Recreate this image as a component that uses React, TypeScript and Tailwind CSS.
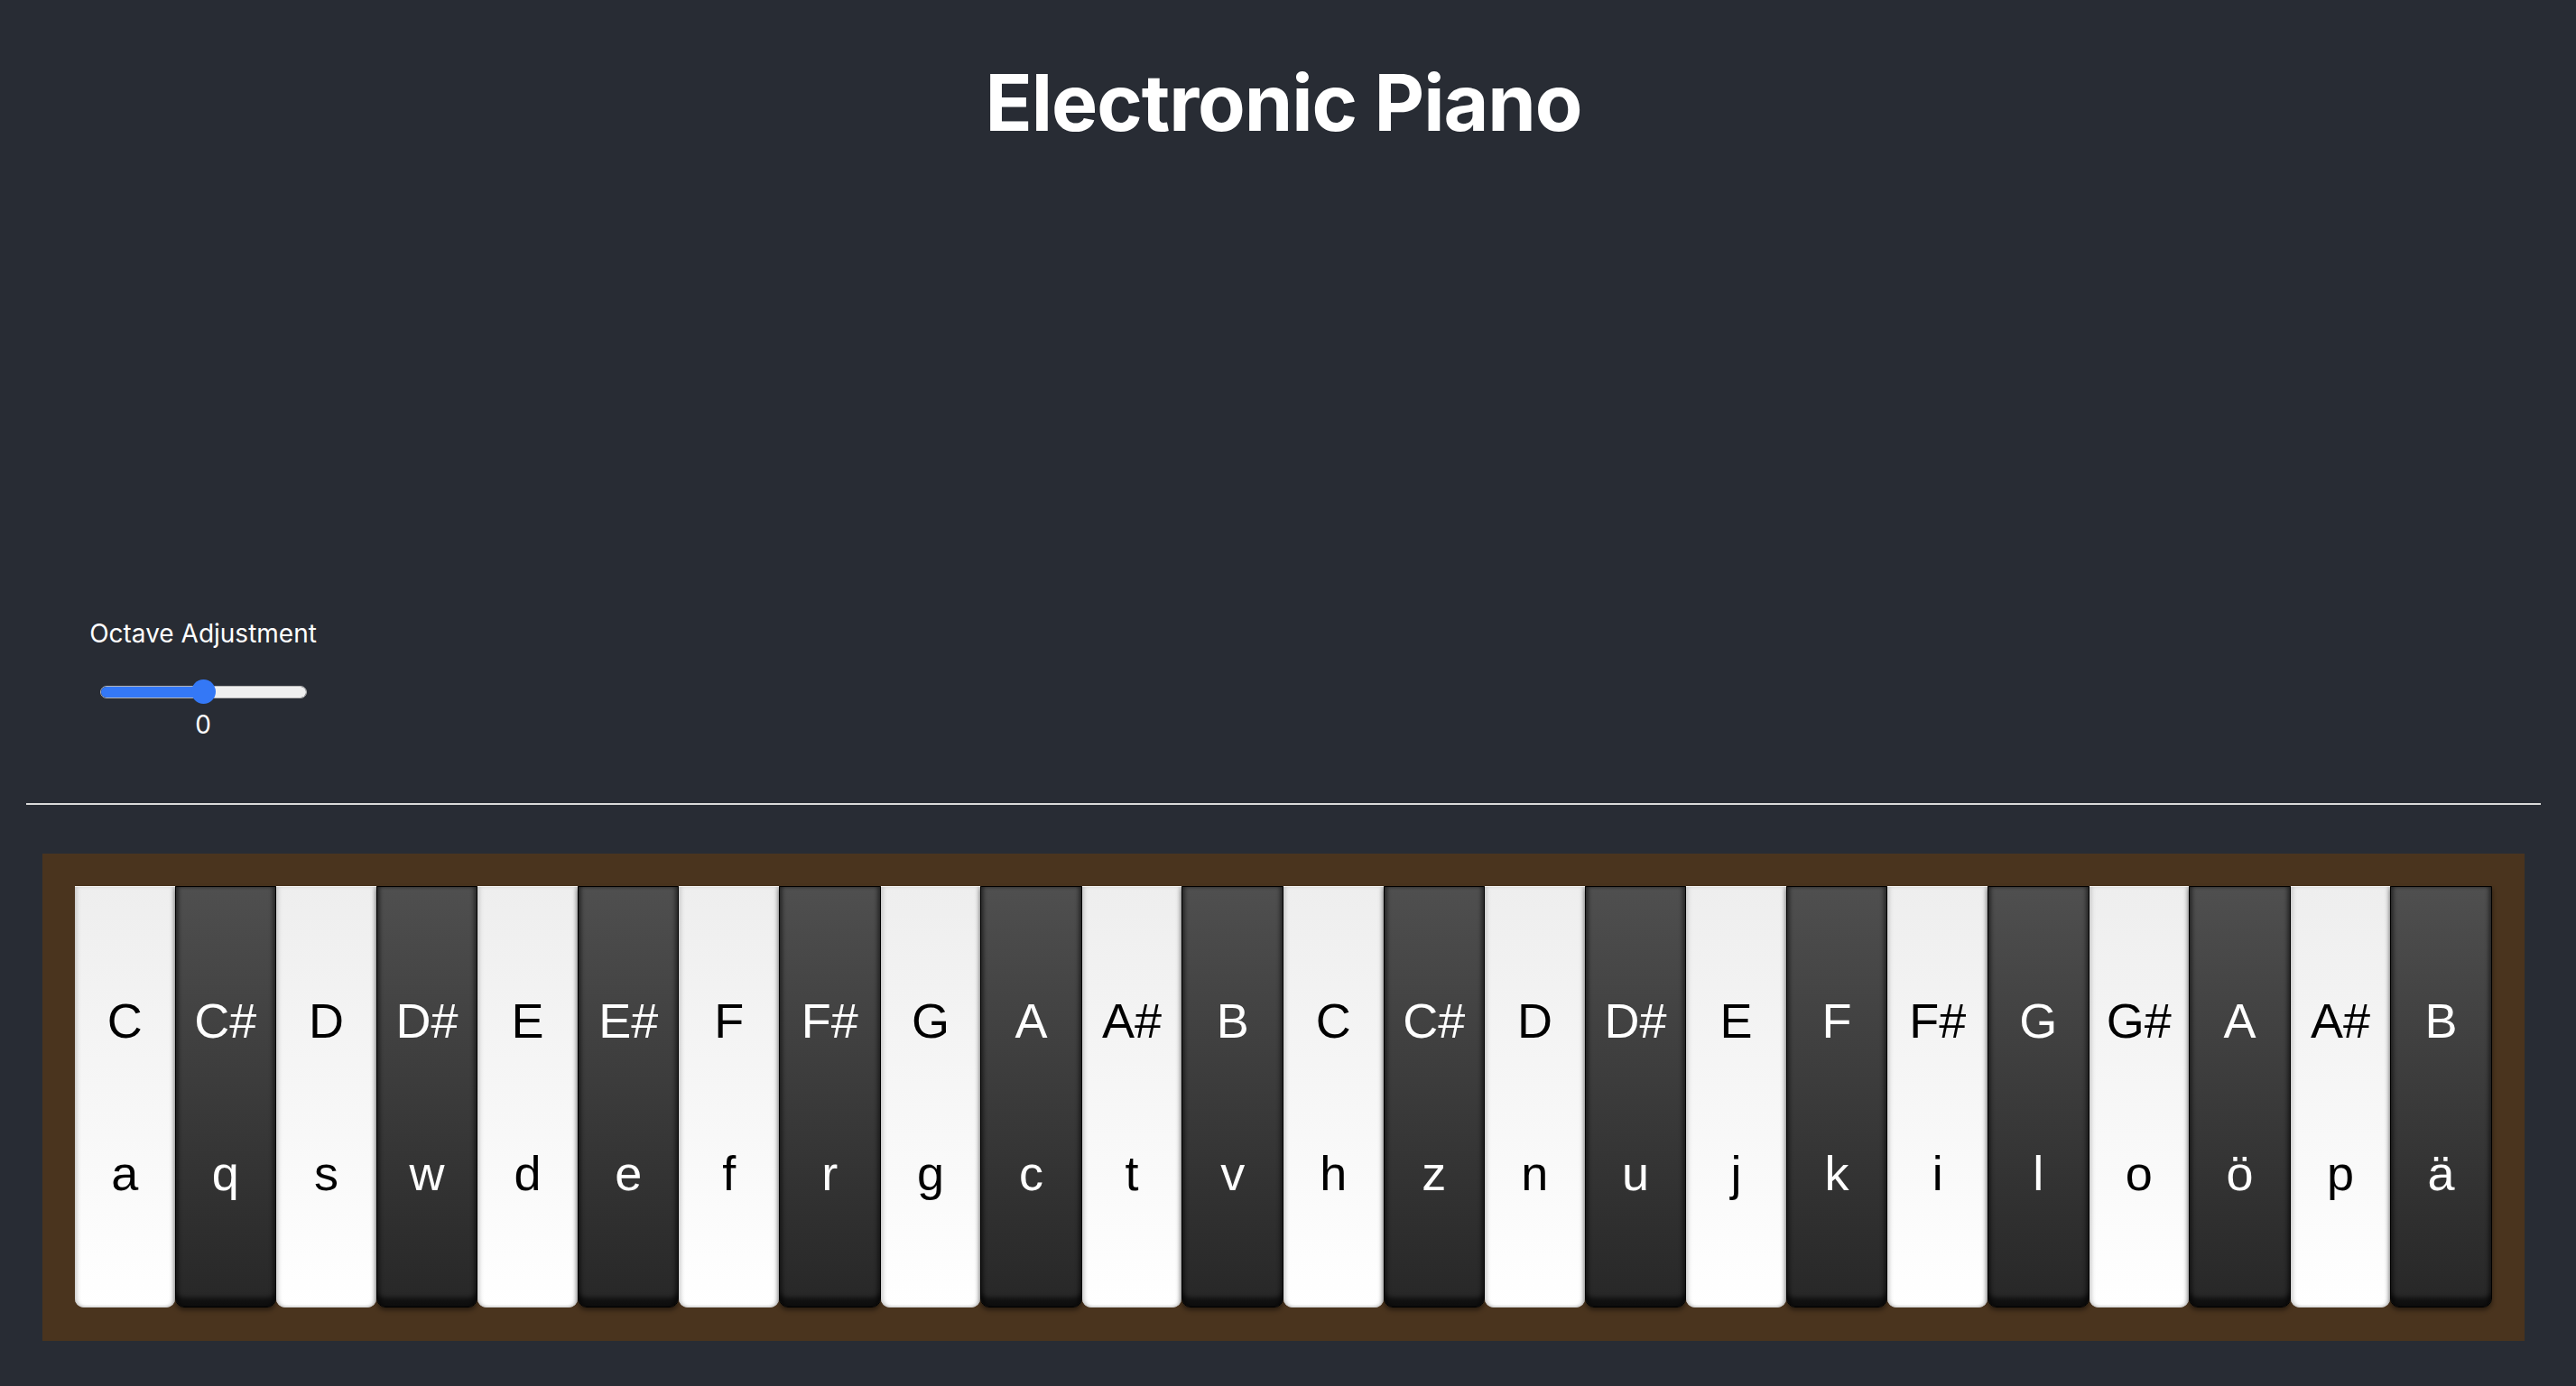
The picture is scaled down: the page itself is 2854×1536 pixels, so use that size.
import React, { useState } from 'react';

const NOTES = ['C', 'C#', 'D', 'D#', 'E', 'E#', 'F', 'F#', 'G', 'A', 'A#', 'B', 'C', 'C#', 'D', 'D#', 'E', 'F', 'F#', 'G', 'G#', 'A', 'A#', 'B'];
const LETTERS = ['a', 'q', 's', 'w', 'd', 'e', 'f', 'r', 'g', 'c', 't', 'v', 'h', 'z', 'n', 'u', 'j', 'k', 'i', 'l', 'o', 'ö', 'p', 'ä'];

const MIN_OCTAVE = -3;
const MAX_OCTAVE = 3;

const PianoKey: React.FC<{ note: string; letter: string; dark: boolean }> = ({ note, letter, dark }) => {
  return (
    <div
      className={`flex-1 flex flex-col items-center pt-[121px] rounded-b-[10px] font-['Liberation_Sans',Arial,sans-serif] ${
        dark
          ? 'bg-linear-to-b from-[#4f4f4f] to-[#272727] border border-black text-white shadow-[inset_0_-13px_5px_-3px_rgba(0,0,0,0.6),inset_4px_0_4px_-1px_rgba(0,0,0,0.45),inset_-4px_0_4px_-1px_rgba(0,0,0,0.45),0_3px_5px_rgba(0,0,0,0.45)]'
          : 'bg-linear-to-b from-[#eeeeee] to-[#ffffff] border-t border-[#fafafa] text-black shadow-[inset_4px_0_5px_-2px_#c4c4c4,inset_-4px_0_5px_-2px_#c4c4c4,inset_0_-3px_3px_-2px_#cfcfcf]'
      }`}
    >
      <span className="text-[54px] leading-[54px]">{note}</span>
      <span className="mt-[115px] text-[54px] leading-[54px]">{letter}</span>
    </div>
  );
};

export default function App() {
  const [octave] = useState(0);
  const pct = ((octave - MIN_OCTAVE) / (MAX_OCTAVE - MIN_OCTAVE)) * 100;

  return (
    <div className="min-h-screen bg-[#282c34] pr-[10px] font-['Inter',sans-serif] text-white">
      <h1 className="pt-[71px] text-center text-[86px] leading-[86px] tracking-[-0.012em] font-bold">Electronic Piano</h1>

      <div className="mt-[531px] ml-[100px] w-[250px] flex flex-col items-center">
        <div className="whitespace-nowrap text-[28px] leading-[28px]">Octave Adjustment</div>
        <div className="relative mt-[37px] h-[27px] w-[229px] flex items-center">
          <div className="h-[14px] w-full rounded-full overflow-hidden flex border border-[#b5b5b5]">
            <div className="bg-[#3478f6]" style={{ width: `${pct}%` }} />
            <div className="flex-1 bg-[#efefef]" />
          </div>
          <div
            className="absolute top-0 h-[27px] w-[27px] -ml-[13.5px] rounded-full bg-[#3478f6]"
            style={{ left: `${pct}%` }}
          />
        </div>
        <div className="mt-[9px] text-[28px] leading-[28px]">{octave}</div>
      </div>

      <div className="mx-[29px] mt-[73px] h-[2px] bg-[#dadada]" />

      <div className="mx-[47px] mt-[54px] px-[36px] pt-[36px] pb-[37px] bg-[#4a341e]">
        <div className="flex h-[467px]">
          {NOTES.map((note, i) => (
            <PianoKey key={i} note={note} letter={LETTERS[i]} dark={i % 2 === 1} />
          ))}
        </div>
      </div>
    </div>
  );
}
